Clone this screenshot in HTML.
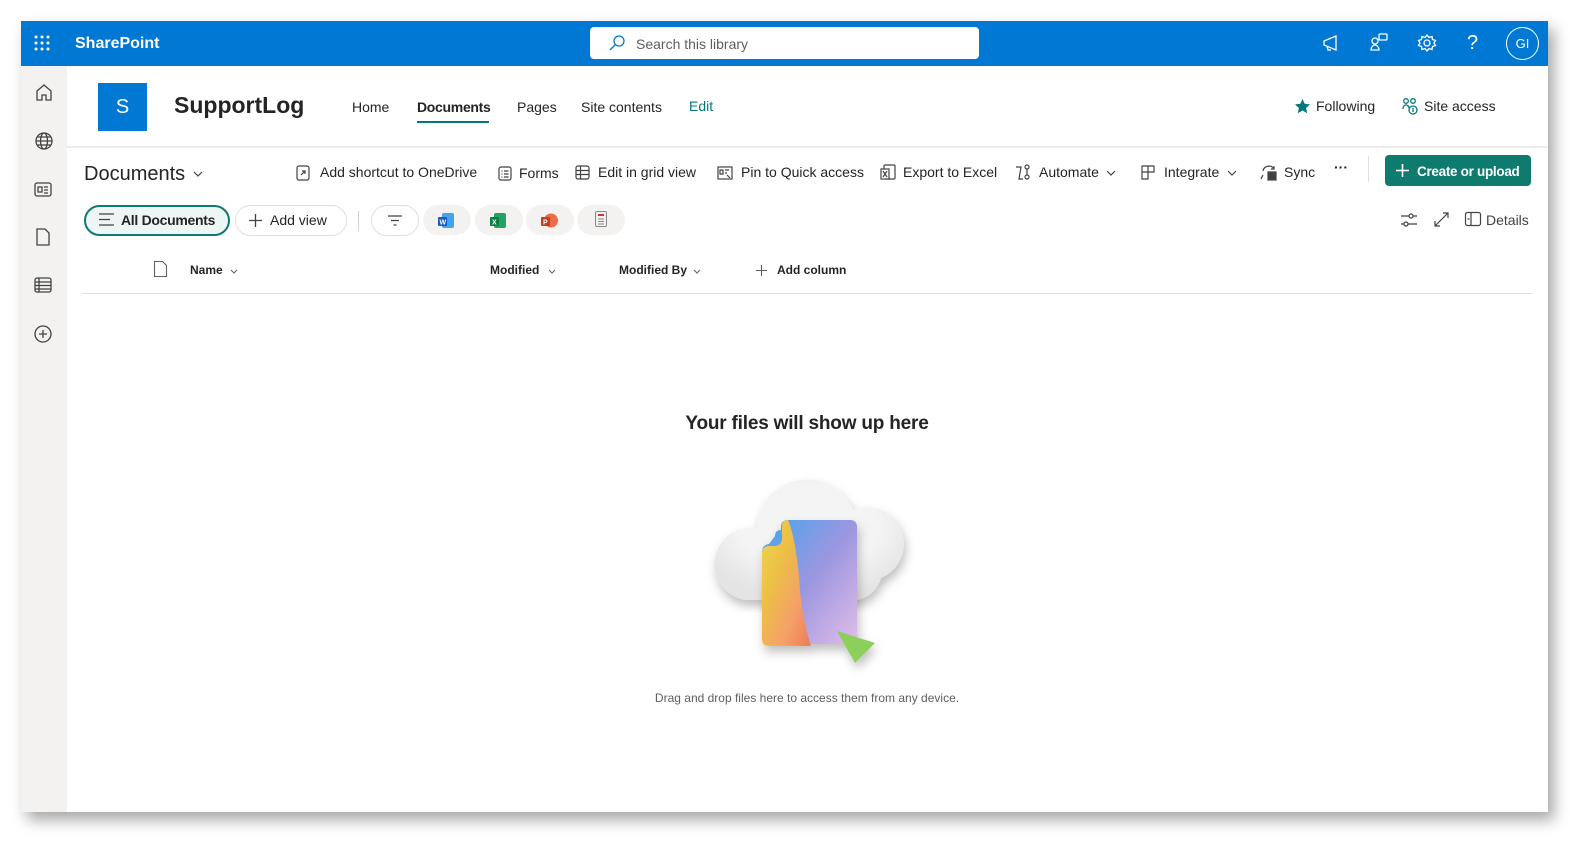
<!DOCTYPE html>
<html><head><meta charset="utf-8"><style>
*{box-sizing:border-box;margin:0;padding:0}
body{width:1589px;height:857px;background:#fff;font-family:"Liberation Sans",sans-serif;color:#242424;position:relative;overflow:hidden}
.win{position:absolute;left:21px;top:21px;width:1527px;height:791px;background:#fff;box-shadow:6px 8px 14px rgba(0,0,0,.35)}
.top{position:absolute;left:0;top:0;width:1527px;height:45px;background:#0078d4}
.abs{position:absolute}
.rail{position:absolute;left:0;top:45px;width:46px;height:746px;background:#f3f2f1}
.t{position:absolute;white-space:nowrap}
svg{position:absolute;overflow:visible}
.pill{position:absolute;height:30px;border-radius:15px;background:#f3f2f1}
.r2{position:absolute;left:0;top:3px;width:100%;height:100%}
</style></head><body>
<div class="win">
 <div class="top">
  <svg style="left:13px;top:14px" width="16" height="16" fill="#fff"><circle cx="2" cy="2" r="1.5"/><circle cx="8" cy="2" r="1.5"/><circle cx="14" cy="2" r="1.5"/><circle cx="2" cy="8" r="1.5"/><circle cx="8" cy="8" r="1.5"/><circle cx="14" cy="8" r="1.5"/><circle cx="2" cy="14" r="1.5"/><circle cx="8" cy="14" r="1.5"/><circle cx="14" cy="14" r="1.5"/></svg>
  <div class="t" style="left:54px;top:14px;color:#fff;font-size:16px;font-weight:bold">SharePoint</div>
  <div class="abs" style="left:569px;top:6px;width:389px;height:32px;background:#fff;border-radius:4px"></div>
  <svg style="left:588px;top:14px" width="16" height="16" fill="none" stroke="#0078d4" stroke-width="1.3"><circle cx="10" cy="6" r="5"/><path d="M6.5 9.5L1 15"/></svg>
  <div class="t" style="left:615px;top:15px;font-size:14px;color:#605e5c">Search this library</div>
  <svg style="left:1301px;top:13px" width="18" height="18" fill="none" stroke="#fff" stroke-width="1.3"><path d="M2 7l12-5v14L2 11z M5 12l1 4h3"/></svg>
  <svg style="left:1349px;top:12px" width="18" height="20" fill="none" stroke="#fff" stroke-width="1.3"><circle cx="5" cy="8" r="3"/><rect x="9" y="1" width="8" height="6" rx="1"/><path d="M1 17c0-3 2-5 4-5s4 2 4 5z"/></svg>
  <svg style="left:1397px;top:13px" width="18" height="18" fill="none" stroke="#fff" stroke-width="1.3"><circle cx="9" cy="9" r="3"/><path d="M9 1l2 2.5 3-1 .5 3 3 1-1.5 2.5 1.5 2.5-3 1-.5 3-3-1L9 17l-2-2.5-3 1-.5-3-3-1L2 9 .5 6.5l3-1 .5-3 3 1z"/></svg>
  <div class="t" style="left:1446px;top:11px;color:#fff;font-size:20px">?</div>
  <div class="abs" style="left:1485px;top:6px;width:33px;height:33px;border:1px solid #fff;border-radius:50%;color:#fff;font-size:13px;text-align:center;line-height:31px">GI</div>
 </div>
 <div class="rail">
  <svg style="left:14px;top:17px" width="18" height="18" fill="none" stroke="#424242" stroke-width="1.3"><path d="M2 8l7-6 7 6v9h-5v-5H7v5H2z"/></svg>
  <svg style="left:14px;top:66px" width="18" height="18" fill="none" stroke="#424242" stroke-width="1.3"><circle cx="9" cy="9" r="8"/><ellipse cx="9" cy="9" rx="3.5" ry="8"/><path d="M1 9h16M2.5 5h13M2.5 13h13"/></svg>
  <svg style="left:13px;top:116px" width="18" height="16" fill="none" stroke="#424242" stroke-width="1.3"><rect x="1" y="1" width="16" height="13" rx="2"/><path d="M4 5h4v5H4zM10 5h4M10 8h4M10 11h4"/></svg>
  <svg style="left:15px;top:162px" width="14" height="18" fill="none" stroke="#424242" stroke-width="1.3"><path d="M1 1h8l4 4v12H1z"/></svg>
  <svg style="left:13px;top:211px" width="18" height="16" fill="none" stroke="#424242" stroke-width="1.3"><rect x="1" y="1" width="16" height="14" rx="2"/><path d="M1 5h16M1 8.5h16M1 12h16M5 1v14"/></svg>
  <svg style="left:13px;top:259px" width="18" height="18" fill="none" stroke="#424242" stroke-width="1.3"><circle cx="9" cy="9" r="8"/><path d="M9 5v8M5 9h8"/></svg>
 </div>
 <div class="abs" style="left:77px;top:62px;width:49px;height:48px;background:#0078d4;color:#fff;font-size:20px;text-align:center;line-height:48px">S</div>
 <div class="t" style="left:153px;top:71px;font-size:23px;font-weight:bold;color:#242424">SupportLog</div>
 <div class="t" style="left:331px;top:78px;font-size:14px">Home</div>
 <div class="t" style="left:396px;top:78px;font-size:14px;font-weight:bold;letter-spacing:-.3px">Documents</div>
 <div class="abs" style="left:396px;top:100px;width:72px;height:2px;background:#03787c"></div>
 <div class="t" style="left:496px;top:78px;font-size:14px">Pages</div>
 <div class="t" style="left:560px;top:78px;font-size:14px">Site contents</div>
 <div class="t" style="left:668px;top:77px;font-size:14px;color:#03787c">Edit</div>
 <svg style="left:1274px;top:78px" width="15" height="15" fill="#03787c"><path d="M7.5 0l2.2 4.8 5.3.6-3.9 3.6 1.1 5.2-4.7-2.7-4.7 2.7 1.1-5.2L0 5.4l5.3-.6z"/></svg>
 <div class="t" style="left:1295px;top:77px;font-size:14px">Following</div>
 <svg style="left:1381px;top:77px" width="16" height="17" fill="none" stroke="#03787c" stroke-width="1.3"><circle cx="4" cy="3" r="2.3"/><circle cx="11" cy="3" r="2.3"/><path d="M1 11c0-3 1.5-4 3-4s3 1 3 3"/><circle cx="11" cy="12" r="4"/><path d="M11 10v4"/></svg>
 <div class="t" style="left:1403px;top:77px;font-size:14px">Site access</div>
 <div class="abs" style="left:46px;top:125px;width:1481px;height:2px;background:#edebe9"></div>

 <div class="r2">
 <div class="t" style="left:63px;top:139px;font-size:20px">Documents</div>
 <svg style="left:172px;top:147px" width="10" height="6" fill="none" stroke="#424242" stroke-width="1.2"><path d="M1 1l4 4 4-4"/></svg>
 <svg style="left:275px;top:141px" width="14" height="16" fill="none" stroke="#424242" stroke-width="1.2"><rect x="1" y="1" width="12" height="14" rx="2"/><path d="M5 10l4-4M6 6h3v3"/></svg>
 <div class="t" style="left:299px;top:140px;font-size:14px">Add shortcut to OneDrive</div>
 <svg style="left:477px;top:142px" width="14" height="15" fill="none" stroke="#424242" stroke-width="1.2"><rect x="1" y="1" width="12" height="13" rx="2"/><path d="M3.5 5h1M6 5h4.5M3.5 8h1M6 8h4.5M3.5 11h1M6 11h4.5"/></svg>
 <div class="t" style="left:498px;top:141px;font-size:14px">Forms</div>
 <svg style="left:554px;top:141px" width="15" height="15" fill="none" stroke="#424242" stroke-width="1.2"><rect x="1" y="1" width="13" height="13" rx="2"/><path d="M1 5.5h13M1 9.5h13M5.5 1v13"/></svg>
 <div class="t" style="left:577px;top:140px;font-size:14px">Edit in grid view</div>
 <svg style="left:696px;top:142px" width="16" height="14" fill="none" stroke="#424242" stroke-width="1.2"><rect x="1" y="1" width="14" height="12"/><path d="M3 4h3v4H3zM8 4h4M8 7h2M10 9l3 3"/></svg>
 <div class="t" style="left:720px;top:140px;font-size:14px">Pin to Quick access</div>
 <svg style="left:859px;top:140px" width="16" height="17" fill="none" stroke="#424242" stroke-width="1.2"><rect x="4" y="1" width="11" height="14" rx="1"/><rect x="1" y="5" width="8" height="10" fill="#fff"/><path d="M3 7l4 6M7 7l-4 6"/></svg>
 <div class="t" style="left:882px;top:140px;font-size:14px">Export to Excel</div>
 <svg style="left:994px;top:140px" width="16" height="17" fill="none" stroke="#424242" stroke-width="1.2"><circle cx="12" cy="3" r="2"/><circle cx="12" cy="13" r="2"/><path d="M1 3h5l-2 12h4M12 5v6"/></svg>
 <div class="t" style="left:1018px;top:140px;font-size:14px">Automate</div>
 <svg style="left:1085px;top:146px" width="10" height="6" fill="none" stroke="#424242" stroke-width="1.2"><path d="M1 1l4 4 4-4"/></svg>
 <svg style="left:1120px;top:141px" width="14" height="15" fill="none" stroke="#424242" stroke-width="1.2"><path d="M1 1h12v6H7v7H1zM1 7h6M7 1v6"/></svg>
 <div class="t" style="left:1143px;top:140px;font-size:14px">Integrate</div>
 <svg style="left:1206px;top:146px" width="10" height="6" fill="none" stroke="#424242" stroke-width="1.2"><path d="M1 1l4 4 4-4"/></svg>
 <svg style="left:1239px;top:140px" width="18" height="17" fill="none" stroke="#424242" stroke-width="1.2"><path d="M3 7a6 6 0 0 1 11-2M14 2v3h-3M3 11l-2 4"/><rect x="8" y="8" width="8" height="8" fill="#424242"/></svg>
 <div class="t" style="left:1263px;top:140px;font-size:14px">Sync</div>
 <div class="t" style="left:1313px;top:135px;font-size:14px;font-weight:bold">···</div>
 <div class="abs" style="left:1347px;top:132px;width:1px;height:26px;background:#e1dfdd"></div>
 <div class="abs" style="left:1364px;top:131px;width:146px;height:31px;background:#0f7b6e;border-radius:4px"></div>
 <svg style="left:1375px;top:140px" width="13" height="13" stroke="#fff" stroke-width="1.6"><path d="M6.5 0v13M0 6.5h13"/></svg>
 <div class="t" style="left:1396px;top:140px;font-size:13.5px;font-weight:bold;color:#fff;letter-spacing:-.3px">Create or upload</div>

 <div class="abs" style="left:63px;top:181px;width:146px;height:31px;border:2px solid #0f7b6e;border-radius:16px;background:#eef6f5"></div>
 <svg style="left:78px;top:189px" width="15" height="13" stroke="#424242" stroke-width="1.3"><path d="M0 1h15M0 6.5h11M0 12h15"/></svg>
 <div class="t" style="left:100px;top:188px;font-size:14px;font-weight:bold;letter-spacing:-.3px">All Documents</div>
 <div class="abs" style="left:214px;top:181px;width:112px;height:31px;border:1px solid #e1dfdd;border-radius:16px"></div>
 <svg style="left:228px;top:190px" width="13" height="13" stroke="#424242" stroke-width="1.3"><path d="M6.5 0v13M0 6.5h13"/></svg>
 <div class="t" style="left:249px;top:188px;font-size:14px">Add view</div>
 <div class="abs" style="left:337px;top:187px;width:1px;height:20px;background:#d2d0ce"></div>
 <div class="abs" style="left:350px;top:181px;width:48px;height:31px;border:1px solid #e1dfdd;border-radius:16px"></div>
 <svg style="left:367px;top:191px" width="14" height="11" stroke="#424242" stroke-width="1.2"><path d="M0 1h14M3 5.5h8M5.5 10h3"/></svg>
 <div class="pill" style="left:402px;top:181px;width:48px"></div>
 <div class="pill" style="left:454px;top:181px;width:48px"></div>
 <div class="pill" style="left:505px;top:181px;width:48px"></div>
 <div class="pill" style="left:556px;top:181px;width:48px"></div>
 <svg style="left:417px;top:188px" width="17" height="17"><rect x="4" y="1" width="12" height="15" rx="2" fill="#41a5ee"/><rect x="0" y="5" width="9" height="9" rx="1" fill="#185abd"/><text x="1.5" y="12.5" font-size="7" fill="#fff" font-family="Liberation Sans" font-weight="bold">W</text></svg>
 <svg style="left:469px;top:188px" width="17" height="17"><rect x="4" y="1" width="12" height="15" rx="2" fill="#21a366"/><rect x="0" y="5" width="9" height="9" rx="1" fill="#107c41"/><text x="2" y="12.5" font-size="7" fill="#fff" font-family="Liberation Sans" font-weight="bold">X</text></svg>
 <svg style="left:520px;top:188px" width="17" height="17"><circle cx="10" cy="8.5" r="7" fill="#ed6c47"/><rect x="0" y="5" width="9" height="9" rx="1" fill="#c43e1c"/><text x="2" y="12.5" font-size="7" fill="#fff" font-family="Liberation Sans" font-weight="bold">P</text></svg>
 <svg style="left:574px;top:187px" width="12" height="17" fill="none" stroke="#888" stroke-width="1"><rect x=".5" y=".5" width="11" height="15" rx="1.5"/><path d="M3 4h6" stroke="#d13438" stroke-width="2"/><path d="M3 8h6M3 10.5h6M3 13h6"/></svg>
 <svg style="left:1380px;top:188px" width="16" height="16" fill="none" stroke="#424242" stroke-width="1.2"><path d="M0 4h16M0 12h16"/><circle cx="10" cy="4" r="2" fill="#fff"/><circle cx="5" cy="12" r="2" fill="#fff"/></svg>
 <svg style="left:1413px;top:187px" width="15" height="16" fill="none" stroke="#424242" stroke-width="1.2"><path d="M1 15L14 2M9 2h5v5M1 10v5h5"/></svg>
 <svg style="left:1444px;top:188px" width="16" height="14" fill="none" stroke="#424242" stroke-width="1.2"><rect x=".5" y=".5" width="15" height="13" rx="2"/><path d="M6 .5v13M2.5 7h2"/></svg>
 <div class="t" style="left:1465px;top:188px;font-size:14px;color:#424242">Details</div>

 <svg style="left:133px;top:237px" width="13" height="16" fill="none" stroke="#616161" stroke-width="1.1"><path d="M.5.5h8l4 4v11H.5z"/></svg>
 <div class="t" style="left:169px;top:239px;font-size:12px;font-weight:bold">Name</div>
 <svg style="left:209px;top:245px" width="8" height="5" fill="none" stroke="#616161"><path d="M1 1l3 3 3-3"/></svg>
 <div class="t" style="left:469px;top:239px;font-size:12px;font-weight:bold">Modified</div>
 <svg style="left:527px;top:245px" width="8" height="5" fill="none" stroke="#616161"><path d="M1 1l3 3 3-3"/></svg>
 <div class="t" style="left:598px;top:239px;font-size:12px;font-weight:bold">Modified By</div>
 <svg style="left:672px;top:245px" width="8" height="5" fill="none" stroke="#616161"><path d="M1 1l3 3 3-3"/></svg>
 <svg style="left:735px;top:241px" width="11" height="11" stroke="#616161" stroke-width="1.1"><path d="M5.5 0v11M0 5.5h11"/></svg>
 <div class="t" style="left:756px;top:239px;font-size:12px;font-weight:bold">Add column</div>
 </div>
 <div class="abs" style="left:61px;top:272px;width:1450px;height:1px;background:#e1dfdd"></div>

 <div class="t" style="left:0;width:1572px;text-align:center;top:392px;font-size:19px;font-weight:bold;color:#242424;letter-spacing:-.2px">Your files will show up here</div>
 <svg style="left:692px;top:447px" width="200" height="210">
  <defs>
   <linearGradient id="g" x1="0" y1="0" x2="1" y2="1"><stop offset="0" stop-color="#f7d84a"/><stop offset=".35" stop-color="#f3c23c"/><stop offset=".7" stop-color="#f9a063"/><stop offset="1" stop-color="#f0794d"/></linearGradient>
   <linearGradient id="b" x1="0" y1="0" x2="1" y2="1"><stop offset="0" stop-color="#43a7ee"/><stop offset=".5" stop-color="#9c96e0"/><stop offset="1" stop-color="#e0bde8"/></linearGradient>
   <radialGradient id="c" cx=".5" cy=".4" r=".6"><stop offset=".6" stop-color="#f4f4f4"/><stop offset="1" stop-color="#e4e4e4"/></radialGradient>
   <filter id="s"><feDropShadow dx="2" dy="6" stdDeviation="5" flood-opacity=".25"/></filter>
  </defs>
  <path d="M32 132 a32 32 0 0 1 12-72 a50 50 0 0 1 96-18 a32 32 0 0 1 28 68 a30 30 0 0 1-25 22z" fill="url(#c)" filter="url(#s)"/>
  <g filter="url(#s)" transform="translate(-8,-2)">
   <path d="M70 70 q0-6 6-6 h0 v-3 q0-7 7-7 h62 q7 0 7 7v110q0 7-7 7H64q-7 0-7-7V86q0-7 7-8z" fill="url(#b)"/>
   <path d="M83 54 q-6 0-6 6 v12 q0 8-8 8 h-5 q-7 0-7 7 v86 q0 7 7 7 h42 q-10-30-12-70 q-4-40 -11-56z" fill="url(#g)" opacity=".95"/>
   <path d="M132 165 l38 12 l-20 20 z" fill="#8ccf5a"/>
  </g>
 </svg>
 <div class="t" style="left:0;width:1572px;text-align:center;top:670px;font-size:12px;color:#605e5c">Drag and drop files here to access them from any device.</div>
</div>
</body></html>
